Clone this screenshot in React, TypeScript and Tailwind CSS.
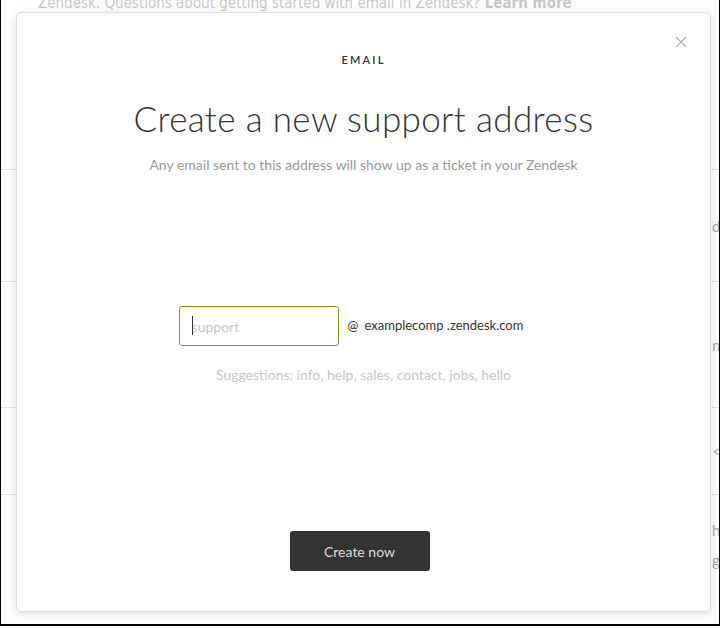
import React from "react";

const font = { fontFamily: '"Lato", "Open Sans", "Liberation Sans", sans-serif' };

function BgRow({ h, right, right2, line = true }: { h: number; right?: string; right2?: string; line?: boolean }) {
  return (
    <div
      className={`flex flex-col justify-center pl-[711px] text-[15px] leading-[20px] text-[#aaa] whitespace-nowrap ${line ? "border-b border-dotted border-[#ccc]" : ""}`}
      style={{ height: h }}
    >
      {right && <span>{right}</span>}
      {right2 && <span className="mt-[10px]">{right2}</span>}
    </div>
  );
}

export default function App() {
  return (
    <div
      className="relative w-[720px] h-[626px] overflow-hidden bg-white border-l border-r border-b-2 border-black"
      style={font}
    >
      {/* background page */}
      <div className="flex flex-col">
        <div className="-mt-[7px] pl-[37px] text-[15px] leading-[20px] text-[#c8c8c8] whitespace-nowrap" style={{ fontFamily: '"DejaVu Sans Condensed", "Liberation Sans Narrow", sans-serif' }}>
          Zendesk. Questions about getting started with email in Zendesk? <span className="font-bold">Learn more</span>
        </div>
        <BgRow h={157} />
        <BgRow h={112} right="d" />
        <BgRow h={126} right="n" />
        <BgRow h={87} right="<e" />
        <BgRow h={100} right="h" right2="ge" line={false} />
      </div>

      {/* modal */}
      <div className="absolute left-[15px] top-[12px] w-[695px] h-[600px] bg-white border border-[#dcdcdc] rounded-[6px] shadow-[0_2px_10px_rgba(0,0,0,0.14)] flex flex-col items-center">
        <button className="absolute right-[23px] top-[23px] w-[12px] h-[12px] text-[#b0b0b0]">
          <svg viewBox="0 0 12 12" width="12" height="12" fill="none" stroke="currentColor" strokeWidth="1.1">
            <path d="M1 1 L11 11 M11 1 L1 11" />
          </svg>
        </button>

        <div className="mt-[39px] text-[11px] leading-[16px] tracking-[2.2px] font-semibold text-[#333]">EMAIL</div>

        <h1 className="mt-[30px] text-[35px] leading-[40px] font-light text-[#333] tracking-[0.35px]">
          Create a new support address
        </h1>

        <p className="mt-[17px] text-[14px] leading-[20px] text-[#999]">
          Any email sent to this address will show up as a ticket in your Zendesk
        </p>

        <div className="mt-[131px] flex items-center ml-[-25px]">
          <div className="relative">
            <input
              readOnly
              placeholder="support"
              className="w-[160px] h-[40px] border border-[#78a300] rounded-[3px] pl-[12px] text-[14px] text-[#333] placeholder:text-[#c8c8c8] outline-none"
              style={font}
            />
            <span className="absolute left-[13px] top-[10px] w-[1px] h-[19px] bg-[#333]" />
          </div>
          <span className="ml-[9px] text-[13px] text-[#333]">@</span>
          <span className="ml-[6px] text-[13px] text-[#333]">examplecomp .zendesk.com</span>
        </div>

        <p className="mt-[19px] text-[14px] leading-[20px] text-[#c8c8c8]">
          Suggestions: info, help, sales, contact, jobs, hello
        </p>

        <button className="mt-[146px] ml-[-8px] w-[140px] h-[40px] rounded-[3px] bg-[#333] text-[14px] text-[#dcdcdc]" style={font}>
          Create now
        </button>
      </div>
    </div>
  );
}
